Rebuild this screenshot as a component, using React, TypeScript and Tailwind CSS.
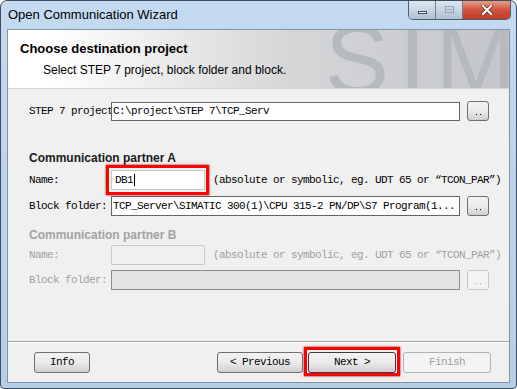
import React from 'react';

const mono = "font-['Liberation_Mono',monospace] text-[11px] tracking-[-0.6px]";
const sans = "font-['Liberation_Sans',Arial,sans-serif]";

const DotsButton: React.FC<{ disabled?: boolean }> = ({ disabled }) => (
  <div
    className={`ml-[7px] w-[22px] h-[20px] rounded-[3px] border flex items-end justify-center pb-[5px] gap-[3px]
      ${disabled ? 'border-[#c4c7ca] bg-[#f4f4f4]' : 'border-[#707070] bg-linear-to-b from-[#f2f2f2] via-[#ebebeb] to-[#cfcfcf]'}`}
  >
    <span className={`w-[1px] h-[1px] ${disabled ? 'bg-[#a0a0a0]' : 'bg-black'}`} />
    <span className={`w-[1px] h-[1px] ${disabled ? 'bg-[#a0a0a0]' : 'bg-black'}`} />
  </div>
);

const Button: React.FC<{ label: string; width: string; disabled?: boolean; primary?: boolean }> = ({ label, width, disabled, primary }) => (
  <div
    className={`${width} h-[21px] rounded-[3px] border flex items-center justify-center ${mono}
      ${disabled ? 'border-[#adb2b5] bg-[#f4f4f4] text-[#a0a0a0]' : primary ? 'border-[#3c3c3c] bg-linear-to-b from-[#f2f2f2] via-[#ebebeb] to-[#cfcfcf] text-black' : 'border-[#707070] bg-linear-to-b from-[#f2f2f2] via-[#ebebeb] to-[#cfcfcf] text-black'}`}
  >
    {label}
  </div>
);

export default function App() {
  return (
    <div className="w-[517px] h-[389px] bg-white">
      <div className="w-[517px] h-[389px] rounded-t-[7px] rounded-b-[4px] border border-[#3e4c5c] bg-linear-to-b from-[#c4daf1] via-[#bcd3ec] to-[#b6cfe9] flex flex-col overflow-hidden">
        {/* title bar */}
        <div className="h-[28px] flex items-start shrink-0">
          <div className={`${sans} text-[13px] text-black ml-[7px] mt-[6px] leading-[16px]`}>Open Communication Wizard</div>
          <div className="ml-auto mr-[5px] -mt-[1px] flex h-[20px] rounded-b-[5px] border border-[#4e5e70] border-t-0 overflow-hidden">
            <div className="w-[27px] h-full bg-linear-to-b from-[#dfe8f2] via-[#c8d6e5] to-[#aebfd2] border-r border-[#6d7f94] flex items-center justify-center">
              <div className="w-[9px] h-[3px] bg-white border border-[#3b4552] mt-[5px]" />
            </div>
            <div className="w-[27px] h-full bg-linear-to-b from-[#dfe8f2] via-[#c8d6e5] to-[#aebfd2] border-r border-[#6d7f94] flex items-center justify-center">
              <div className="w-[9px] h-[7px] border border-[#96a5b6] flex items-center justify-center">
                <div className="w-[5px] h-[2px] border-t border-[#96a5b6]" />
              </div>
            </div>
            <div className="w-[47px] h-full bg-linear-to-b from-[#e8a592] via-[#d2553f] to-[#c13b27] flex items-center justify-center">
              <svg width="12" height="10" viewBox="0 0 12 10">
                <path d="M2 1 L10 9 M10 1 L2 9" stroke="#5a2418" strokeWidth="3.6" strokeLinecap="square" />
                <path d="M2 1 L10 9 M10 1 L2 9" stroke="#ffffff" strokeWidth="2.2" strokeLinecap="square" />
              </svg>
            </div>
          </div>
        </div>

        {/* client area */}
        <div className="ml-[6px] w-[503px] h-[354px] border border-[#8194a8] bg-[#f0f0f0] flex flex-col">
          {/* header */}
          <div className="relative h-[59px] shrink-0 overflow-hidden bg-linear-to-r from-white from-[8%] via-[#d6d7d9] via-[55%] to-[#c3c5c8] border-b border-[#d4d4d4]">
            <div className={`absolute left-[317px] -top-[18px] ${sans} text-[96px] leading-none tracking-[10px] text-[#b6b9bd] whitespace-nowrap`}>SIMA</div>
            <div className="relative flex flex-col">
              <div className={`${sans} font-bold text-[13px] text-black ml-[12px] mt-[11px] leading-[16px]`}>Choose destination project</div>
              <div className={`${sans} text-[12px] text-black ml-[35px] mt-[6px] leading-[14px]`}>Select STEP 7 project, block folder and block.</div>
            </div>
          </div>

          {/* body */}
          <div className="flex flex-col pl-[21px] h-[252px] shrink-0">
            <div className="flex items-center mt-[12px] h-[20px]">
              <div className={`${mono} w-[82px] shrink-0 whitespace-nowrap text-black`}>STEP 7 project</div>
              <div className={`w-[349px] h-[19px] bg-white border border-[#646464] flex items-center pl-[1px] ${mono} text-black`}>C:\project\STEP 7\TCP_Serv</div>
              <DotsButton />
            </div>

            <div className={`${sans} font-bold text-[12px] leading-[14px] text-[#1a1a1a] mt-[30px]`}>Communication partner A</div>

            <div className="flex items-center h-[30px]">
              <div className={`${mono} w-[82px] shrink-0 text-black`}>Name:</div>
              <div className="relative">
                <div className={`w-[94px] h-[20px] bg-white border border-[#c8c8c8] flex items-center pl-[3px] ${mono} text-black`}>
                  DB1<span className="w-[1px] h-[12px] bg-black ml-[1px]" />
                </div>
                <div className="absolute -left-[5px] -top-[5px] -right-[4px] -bottom-[5px] border-[3px] border-[#ff0000] shadow-[0_0_2px_#800]" />
              </div>
              <div className={`${mono} ml-[8px] text-black whitespace-nowrap`}>(absolute or symbolic, eg. UDT 65 or “TCON_PAR”)</div>
            </div>

            <div className="flex items-center mt-[1px] h-[20px]">
              <div className={`${mono} w-[82px] shrink-0 whitespace-nowrap text-black`}>Block folder:</div>
              <div className={`w-[349px] h-[20px] bg-white border border-[#646464] flex items-center pl-[1px] ${mono} text-black whitespace-nowrap overflow-hidden`}>TCP_Server\SIMATIC 300(1)\CPU 315-2 PN/DP\S7 Program(1...</div>
              <DotsButton />
            </div>

            <div className={`${sans} font-bold text-[12px] leading-[14px] text-[#a3a3a3] mt-[12px]`}>Communication partner B</div>

            <div className="flex items-center mt-[3px] h-[20px]">
              <div className={`${mono} w-[82px] shrink-0 text-[#a0a0a0]`}>Name:</div>
              <div className="w-[94px] h-[20px] bg-[#f0f0f0] border border-[#c9c9c9] rounded-[1px]" />
              <div className={`${mono} ml-[8px] text-[#a0a0a0] whitespace-nowrap`}>(absolute or symbolic, eg. UDT 65 or “TCON_PAR”)</div>
            </div>

            <div className="flex items-center mt-[5px] h-[20px]">
              <div className={`${mono} w-[82px] shrink-0 whitespace-nowrap text-[#a0a0a0]`}>Block folder:</div>
              <div className="w-[349px] h-[20px] bg-[#e3e3e3] border border-[#8d8d8d]" />
              <DotsButton disabled />
            </div>
          </div>

          {/* separator */}
          <div className="h-[1px] bg-[#a0a0a0] shrink-0" />
          <div className="h-[1px] bg-white shrink-0" />

          {/* footer */}
          <div className="flex items-start pt-[9px] pl-[26px]">
            <Button label="Info" width="w-[56px]" />
            <div className="ml-[127px]">
              <Button label="< Previous" width="w-[86px]" />
            </div>
            <div className="relative ml-[5px]">
              <Button label="Next >" width="w-[88px]" primary />
              <div className="absolute -left-[4px] -top-[5px] -right-[4px] -bottom-[3px] border-[3px] border-[#ff0000] shadow-[0_0_2px_#800]" />
            </div>
            <div className="ml-[7px]">
              <Button label="Finish" width="w-[88px]" disabled />
            </div>
          </div>
        </div>
      </div>
    </div>
  );
}
